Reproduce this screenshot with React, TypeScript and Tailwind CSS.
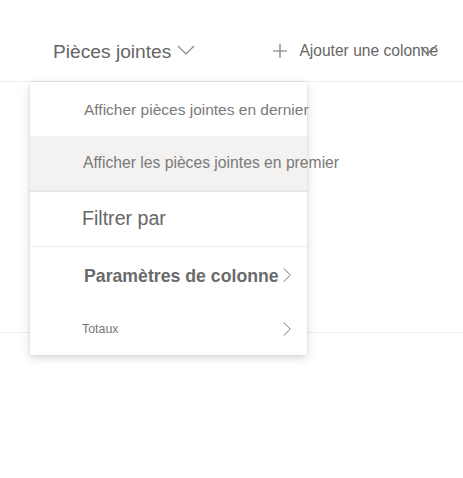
const Chevron = ({ className }: { className?: string }) => (
  <svg className={className} viewBox="0 0 12 20" fill="none" stroke="currentColor" strokeWidth={1.2}>
    <path d="M2 2l8 8-8 8" />
  </svg>
);

export default function App() {
  return (
    <div className="relative w-[463px] h-[478px] bg-white overflow-hidden" style={{ fontFamily: '"Liberation Sans", Arial, sans-serif' }}>
      {/* Header */}
      <div className="relative h-[82px] pt-[24px] border-b border-[#eeeeee] flex items-center">
        <div className="flex items-center ml-[53px] text-[#666666]">
          <span className="text-[19.2px]">Pièces jointes</span>
          <svg className="w-[18px] h-[10px] ml-[6px] -mt-[4px]" viewBox="0 0 18 10" fill="none" stroke="#8a8886" strokeWidth={1.2}>
            <path d="M1 1l8 8 8-8" />
          </svg>
        </div>
        <div className="flex items-center ml-[78px] text-[#666666]">
          <svg className="w-[14px] h-[14px] -mt-[2px]" viewBox="0 0 14 14" fill="none" stroke="#777" strokeWidth={1.2}>
            <path d="M7 0v14M0 7h14" />
          </svg>
          <span className="ml-[12px] text-[15.6px] -mt-[4px]">Ajouter une colonne</span>
        </div>
        <svg className="absolute left-[420px] top-[44px] w-[18px] h-[12px]" viewBox="0 0 18 12" fill="none" stroke="#777" strokeWidth={1.3}>
          <path d="M1 3l6 7L17 1" />
        </svg>
      </div>

      {/* Page separator behind the menu */}
      <div className="mt-[250px] border-b border-[#eeeeee]" />

      {/* Context menu */}
      <div className="absolute left-[30px] top-[82px] w-[277px] bg-white rounded-[2px] shadow-[0_3px_10px_rgba(0,0,0,0.16),0_0_3px_rgba(0,0,0,0.08)]">
        <div className="h-[54px] flex items-center pl-[54px] text-[15.5px] text-[#7a7a7a] whitespace-nowrap">
          <span className="mt-[1px]">Afficher pièces jointes en dernier</span>
        </div>
        <div className="h-[56px] flex items-center pl-[53px] text-[15.7px] text-[#7a7a7a] bg-[#f3f2f1] border-b-2 border-[#e8e6e4] whitespace-nowrap">
          <span>Afficher les pièces jointes en premier</span>
        </div>
        <div className="h-[55px] flex items-center pl-[52px] text-[19.6px] text-[#666666] border-b border-[#eeeeee]">
          Filtrer par
        </div>
        <div className="h-[53px] flex items-center pl-[54px] text-[#6a6a6a]">
          <span className="text-[17.7px] font-bold mt-[6px]">Paramètres de colonne</span>
          <Chevron className="w-[10px] h-[18px] mt-[2px] ml-[3px] text-[#777]" />
        </div>
        <div className="h-[55px] flex items-center justify-between pl-[52px] pr-[15px] text-[#777777]">
          <span className="text-[12.4px] mt-[3px]">Totaux</span>
          <Chevron className="w-[10px] h-[18px] mt-[2px] text-[#777]" />
        </div>
      </div>
    </div>
  );
}
